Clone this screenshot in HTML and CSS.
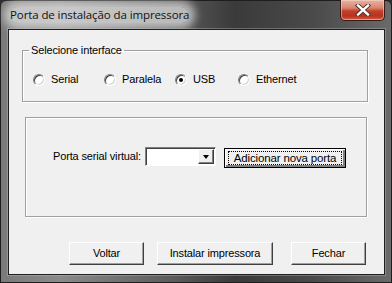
FILE: index.html
```html
<!DOCTYPE html>
<html>
<head>
<meta charset="utf-8">
<link rel="stylesheet" href="styles.css">
</head>
<body>
<div class="window">
  <div class="titlebar">
    <span class="title">Porta de instalação da impressora</span>
    <div class="close">
      <svg width="18" height="12" viewBox="0 0 18 12">
        <path d="M4 1.5 L14 10.5 M14 1.5 L4 10.5" stroke="#4a2a24" stroke-width="4.2" stroke-linecap="square" fill="none"/>
        <path d="M4 1.5 L14 10.5 M14 1.5 L4 10.5" stroke="#ffffff" stroke-width="2.4" stroke-linecap="square" fill="none"/>
      </svg>
    </div>
  </div>
  <div class="client">
    <fieldset class="group group-iface">
      <legend>Selecione interface</legend>
      <div class="radios">
        <label class="radio r1"><span class="dot"></span>Serial</label>
        <label class="radio r2"><span class="dot"></span>Paralela</label>
        <label class="radio r3"><span class="dot checked"></span>USB</label>
        <label class="radio r4"><span class="dot"></span>Ethernet</label>
      </div>
    </fieldset>
    <div class="group group-port">
      <div class="port-row">
        <span class="port-label">Porta serial virtual:</span>
        <div class="combo">
          <div class="combo-field"></div>
          <div class="combo-btn"><span class="arrow"></span></div>
        </div>
        <button class="btn btn-add"><span class="focus">Adicionar nova porta</span></button>
      </div>
    </div>
    <div class="actions">
      <button class="btn btn-back">Voltar</button>
      <button class="btn btn-install">Instalar impressora</button>
      <button class="btn btn-close">Fechar</button>
    </div>
  </div>
</div>
</body>
</html>
```

FILE: styles.css
```css
* { box-sizing: border-box; }
html, body { margin: 0; padding: 0; }
body { width: 392px; height: 283px; overflow: hidden; background: #2c2c2c; }

.window {
  width: 392px;
  height: 283px;
  background:
    linear-gradient(90deg, #7a7a7a 0%, #8a8a8a 15%, #5a5a5a 45%, #3a3a3a 60%, #4a4a4a 80%, #6a6a6a 100%);
  display: flex;
  flex-direction: column;
  border: 1px solid #1e1e1e;
  border-radius: 6px 6px 0 0;
}

.titlebar {
  height: 28px;
  display: flex;
  align-items: flex-start;
  justify-content: space-between;
  padding-left: 9px;
  padding-right: 6px;
}

.title {
  margin-top: 6px;
  font-family: "Open Sans", "Noto Sans", sans-serif;
  font-size: 11.5px;
  line-height: 16px;
  color: #111;
  background: rgba(228, 228, 228, 0.7);
  box-shadow: 0 0 8px 6px rgba(228, 228, 228, 0.7);
  border-radius: 8px;
  letter-spacing: -0.1px;
}

.close {
  width: 45px;
  height: 21px;
  margin-top: -1px;
  border: 1px solid #3a1a14;
  border-top: none;
  border-radius: 0 0 5px 5px;
  background: linear-gradient(180deg, #e8b4a4 0%, #d88470 40%, #c2402a 55%, #b8321e 80%, #d0604a 100%);
  box-shadow: inset 0 0 0 1px rgba(255, 220, 210, 0.5);
  display: flex;
  align-items: center;
  justify-content: center;
}

.client {
  margin: 0 6px 0 7px;
  height: 246px;
  background: #f0f0f0;
  border: 1px solid #1f1f1f;
  box-shadow: 0 0 0 1px rgba(200, 200, 200, 0.35);
  font-family: "Liberation Sans", Arial, sans-serif;
  font-size: 11px;
  letter-spacing: -0.15px;
  color: #000;
  display: flex;
  flex-direction: column;
}

.group {
  border: 1px solid #a0a0a0;
  box-shadow: inset 1px 1px 0 #ffffff, 1px 1px 0 #ffffff;
}

.group-iface {
  margin: 14px 0 0 13px;
  padding: 0 0 0 10px;
  width: 346px;
  height: 58px;
  min-inline-size: 0;
}

.group-iface legend {
  padding: 0 2px;
  margin-left: -4px;
  line-height: 13px;
  font-size: 11px;
}

.radios {
  display: flex;
  margin-top: 16px;
  height: 13px;
  align-items: center;
}

.radio {
  display: flex;
  align-items: center;
  gap: 6px;
  line-height: 13px;
}
.r1, .r2 { width: 71px; }
.r3 { width: 63px; }

.dot {
  width: 12px;
  height: 12px;
  border-radius: 50%;
  background: #fff;
  border: 1px solid;
  border-color: #808080 #ffffff #ffffff #808080;
  box-shadow: inset 1px 1px 0 #404040, inset -1px -1px 0 #d4d0c8;
  position: relative;
}
.dot.checked::after {
  content: "";
  position: absolute;
  left: 3px;
  top: 3px;
  width: 4px;
  height: 4px;
  border-radius: 50%;
  background: #000;
}

.group-port {
  margin: 15px 0 0 16px;
  width: 342px;
  height: 100px;
  padding: 28px 0 0 27px;
}

.port-row {
  display: flex;
  align-items: center;
  height: 21px;
}

.port-label {
  width: 92px;
  line-height: 13px;
  white-space: nowrap;
}

.combo {
  width: 71px;
  height: 19px;
  display: flex;
  background: #fff;
  border: 1px solid;
  border-color: #808080 #ffffff #ffffff #808080;
  box-shadow: inset 1px 1px 0 #404040;
  padding: 1px;
}
.combo-field { flex: 1; }
.combo-btn {
  width: 16px;
  height: 15px;
  background: #f0f0f0;
  border: 1px solid;
  border-color: #ffffff #404040 #404040 #ffffff;
  box-shadow: inset -1px -1px 0 #808080;
  display: flex;
  align-items: center;
  justify-content: center;
}
.arrow {
  width: 0;
  height: 0;
  border-left: 3.5px solid transparent;
  border-right: 3.5px solid transparent;
  border-top: 4px solid #000;
  margin-top: 1px;
}

.btn {
  font-family: "Liberation Sans", Arial, sans-serif;
  font-size: 11px;
  letter-spacing: -0.15px;
  color: #000;
  background: #f0f0f0;
  border: 1px solid;
  border-color: #ffffff #404040 #404040 #ffffff;
  box-shadow: inset -1px -1px 0 #a0a0a0;
  padding: 0;
  height: 23px;
  display: flex;
  align-items: center;
  justify-content: center;
  line-height: 13px;
  white-space: nowrap;
}

.btn-add {
  margin-left: 8px;
  width: 122px;
  height: 20px;
  margin-top: 3px;
  border: 1px solid #000;
  box-shadow: inset 1px 1px 0 #ffffff, inset -2px -2px 0 #808080;
}
.btn-add .focus {
  display: block;
  border: 1px dotted #000;
  width: 114px;
  height: 14px;
  line-height: 12px;
  font-size: 11.5px;
  text-align: center;
}

.actions {
  display: flex;
  margin: 25px 0 0 60px;
}
.btn-back { width: 75px; }
.btn-install { width: 116px; margin-left: 13px; }
.btn-close { width: 75px; margin-left: 18px; }
```
